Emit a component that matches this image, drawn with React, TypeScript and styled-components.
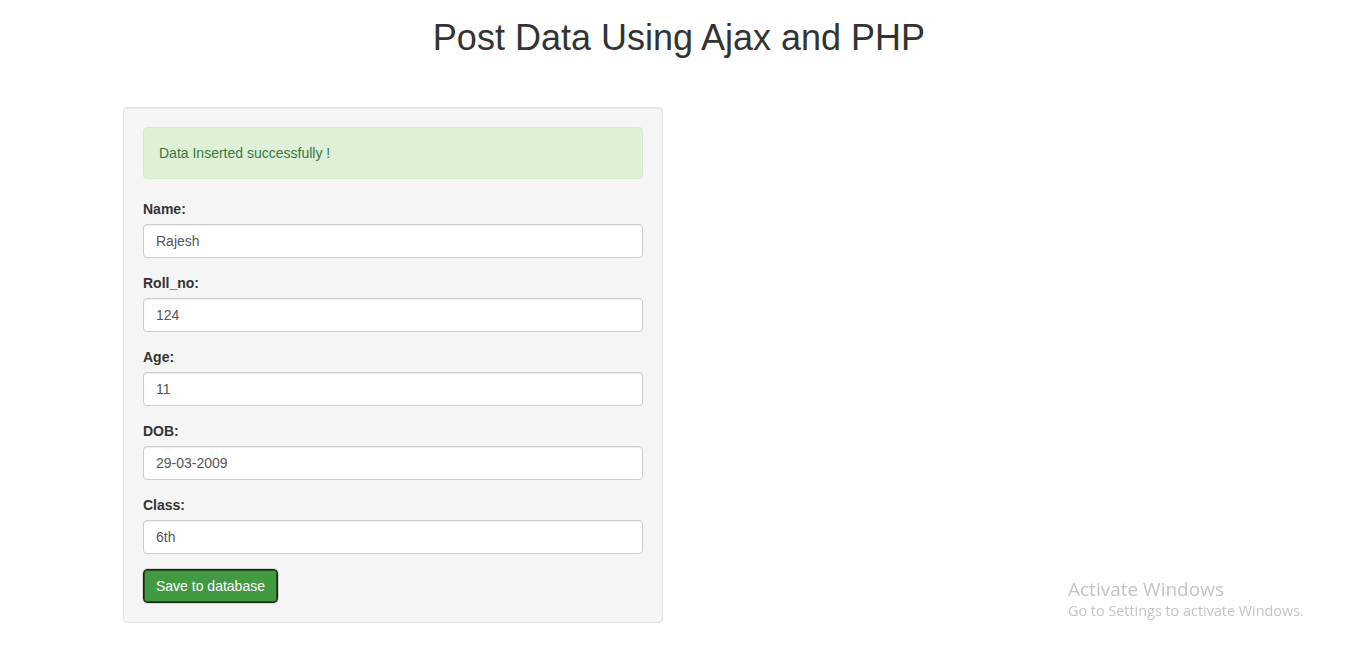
import React from 'react';
import styled, { createGlobalStyle } from 'styled-components';

const GlobalStyle = createGlobalStyle`
  html, body {
    margin: 0;
    padding: 0;
    background: #fff;
  }
  body {
    font-family: "Liberation Sans", Arial, Helvetica, sans-serif;
    font-size: 14px;
    line-height: 1.42857;
    color: #333;
  }
  * {
    box-sizing: border-box;
  }
`;

const Page = styled.div`
  width: 1358px;
  min-height: 651px;
  padding-top: 16px;
`;

const Title = styled.h1`
  margin: 0 0 47px;
  text-align: center;
  font-size: 36px;
  font-weight: 400;
  line-height: 44px;
  color: #333;
`;

const Column = styled.div`
  width: 540px;
  margin-left: 123px;
`;

const Well = styled.form`
  padding: 19px;
  background-color: #f5f5f5;
  border: 1px solid #e3e3e3;
  border-radius: 4px;
  box-shadow: inset 0 1px 1px rgba(0, 0, 0, 0.05);
`;

const Alert = styled.div`
  padding: 15px;
  margin-bottom: 20px;
  background-color: #dff0d8;
  border: 1px solid #d6e9c6;
  border-radius: 4px;
  color: #3c763d;
  line-height: 20px;
`;

const Group = styled.div`
  margin-bottom: 15px;
`;

const Label = styled.label`
  display: block;
  margin-bottom: 5px;
  font-weight: 700;
  line-height: 20px;
`;

const Field = styled.input`
  display: block;
  width: 100%;
  height: 34px;
  padding: 6px 12px;
  font-family: inherit;
  font-size: 14px;
  line-height: 20px;
  color: #555;
  background-color: #fff;
  border: 1px solid #ccc;
  border-radius: 4px;
  box-shadow: inset 0 1px 1px rgba(0, 0, 0, 0.075);
  outline: none;
`;

const SaveButton = styled.button`
  display: inline-block;
  height: 34px;
  padding: 6px 12px;
  font-family: inherit;
  font-size: 14px;
  line-height: 20px;
  color: #fff;
  background-color: #419a41;
  border: 1px solid #13290f;
  border-radius: 4px;
  outline: 1px solid #d8d8d8;
  box-shadow: inset 0 0 0 1px #24521f;
  cursor: pointer;
`;

const Watermark = styled.div`
  position: fixed;
  left: 1068px;
  top: 577px;
  font-family: "Open Sans", "Noto Sans", sans-serif;
  color: #c4c4c4;
`;

const WatermarkTitle = styled.div`
  font-size: 19px;
  line-height: 24px;
`;

const WatermarkText = styled.div`
  font-size: 14.4px;
  line-height: 20px;
`;

const fields = [
  { id: 'name', label: 'Name:', value: 'Rajesh' },
  { id: 'roll_no', label: 'Roll_no:', value: '124' },
  { id: 'age', label: 'Age:', value: '11' },
  { id: 'dob', label: 'DOB:', value: '29-03-2009' },
  { id: 'class', label: 'Class:', value: '6th' },
];

export default function App(): JSX.Element {
  return (
    <Page>
      <GlobalStyle />
      <Title>Post Data Using Ajax and PHP</Title>
      <Column>
        <Well onSubmit={(e) => e.preventDefault()}>
          <Alert>Data Inserted successfully !</Alert>
          {fields.map((f) => (
            <Group key={f.id}>
              <Label htmlFor={f.id}>{f.label}</Label>
              <Field id={f.id} name={f.id} defaultValue={f.value} />
            </Group>
          ))}
          <SaveButton type="submit">Save to database</SaveButton>
        </Well>
      </Column>
      <Watermark>
        <WatermarkTitle>Activate Windows</WatermarkTitle>
        <WatermarkText>Go to Settings to activate Windows.</WatermarkText>
      </Watermark>
    </Page>
  );
}
